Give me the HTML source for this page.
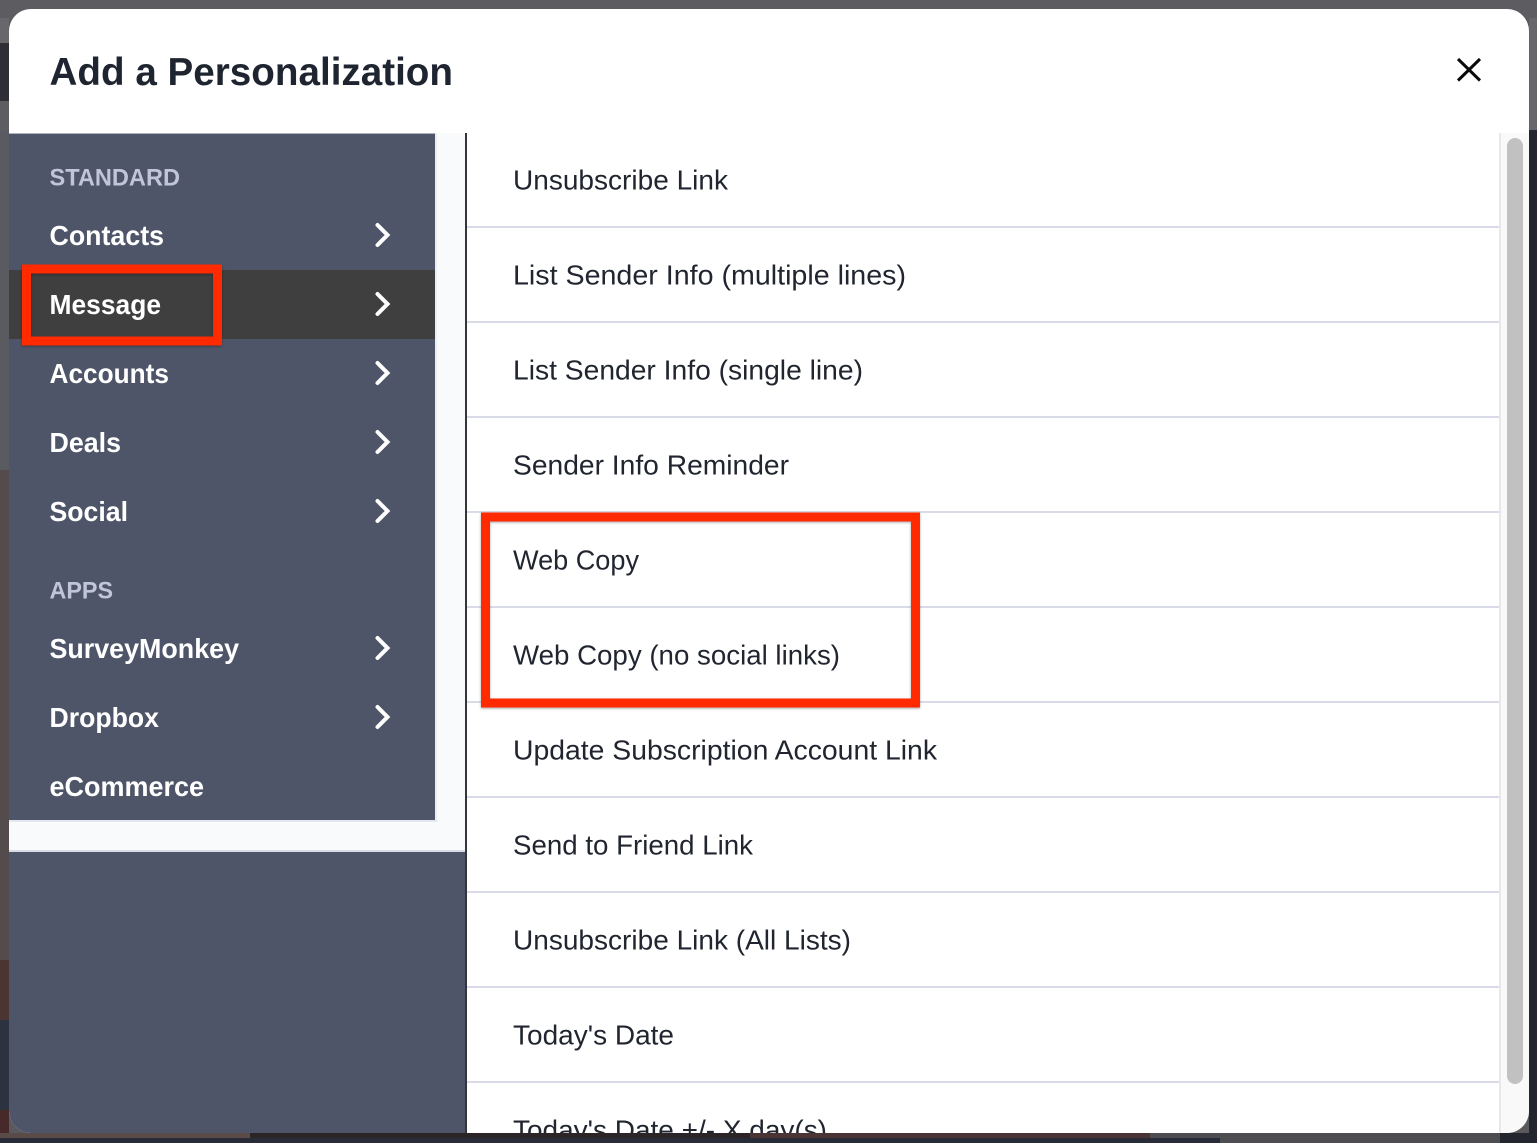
<!DOCTYPE html>
<html>
<head>
<meta charset="utf-8">
<style>
html,body{margin:0;padding:0;width:1537px;height:1143px;overflow:hidden;background:#5a5a5e}
svg{position:absolute;left:0;top:0;display:block}
text{font-family:"Liberation Sans",sans-serif}
.t{font-size:27.5px;fill:#20252f}
.n{font-size:28px;font-weight:700;fill:#fff}
.h{font-size:24px;font-weight:700;fill:#c0c5d8}
</style>
</head>
<body>
<svg width="1537" height="1143" viewBox="0 0 1537 1143" xmlns="http://www.w3.org/2000/svg">
<defs>
<clipPath id="m"><rect x="9" y="9" width="1520" height="1124" rx="22"/></clipPath>
<filter id="s" x="-10%" y="-10%" width="120%" height="120%"><feDropShadow dx="0" dy="1" stdDeviation="1.2" flood-color="#000" flood-opacity=".35"/></filter>
</defs>

<!-- backdrop -->
<rect width="1537" height="1143" fill="#5a5a5e"/>
<rect width="1537" height="18" fill="#5c5c61"/>
<rect x="0" y="18" width="9" height="25" fill="#68686c"/>
<rect x="0" y="43" width="9" height="58" fill="#2e2f36"/>
<rect x="0" y="101" width="9" height="29" fill="#5e5e62"/>
<rect x="0" y="130" width="9" height="340" fill="#5a5b60"/>
<rect x="0" y="470" width="9" height="490" fill="#544c4c"/>
<rect x="0" y="960" width="9" height="60" fill="#4a3532"/>
<rect x="0" y="1020" width="9" height="90" fill="#2d3240"/>
<rect x="0" y="1110" width="9" height="25" fill="#48292a"/>
<rect x="1529" y="18" width="8" height="112" fill="#66666b"/>
<rect x="1529" y="130" width="8" height="1013" fill="#23262f"/>
<rect x="0" y="1133" width="250" height="5" fill="#5a4a48"/>
<rect x="250" y="1133" width="500" height="5" fill="#2b2527"/>
<rect x="750" y="1133" width="400" height="5" fill="#4a3436"/>
<rect x="1150" y="1133" width="350" height="10" fill="#4e4e52"/>
<rect x="1500" y="1133" width="37" height="10" fill="#23262f"/>
<rect x="0" y="1138" width="1220" height="5" fill="#282c38"/>

<!-- modal -->
<g clip-path="url(#m)">
<rect x="9" y="9" width="1520" height="1124" fill="#fff"/>

<!-- left column -->
<rect x="9" y="133" width="456" height="1000" fill="#4f5568"/>
<rect x="9" y="821" width="456" height="29" fill="#f9fafb"/>
<rect x="435" y="133" width="30" height="717" fill="#f9fafb"/>
<rect x="435" y="133" width="2" height="689" fill="#eceef3"/>
<rect x="9" y="820" width="428" height="2" fill="#e4e7ee"/>
<rect x="9" y="850" width="456" height="2" fill="#d9dce4"/>
<rect x="9" y="133" width="426" height="1" fill="#aeb2bf"/>
<rect x="465" y="133" width="2" height="1000" fill="#34353b"/>
<rect x="9" y="270" width="426" height="69" fill="#3f3f3f"/>

<!-- list separators -->
<g fill="#d9dce8">
<rect x="467" y="226" width="1032" height="2"/>
<rect x="467" y="321" width="1032" height="2"/>
<rect x="467" y="416" width="1032" height="2"/>
<rect x="467" y="511" width="1032" height="2"/>
<rect x="467" y="606" width="1032" height="2"/>
<rect x="467" y="701" width="1032" height="2"/>
<rect x="467" y="796" width="1032" height="2"/>
<rect x="467" y="891" width="1032" height="2"/>
<rect x="467" y="986" width="1032" height="2"/>
<rect x="467" y="1081" width="1032" height="2"/>
</g>

<!-- scrollbar -->
<rect x="1499" y="133" width="30" height="1000" fill="#f9f9f9"/>
<rect x="1499" y="133" width="2" height="1000" fill="#e8e8e8"/>
<rect x="1507" y="138" width="16" height="946" rx="8" fill="#c1c1c1"/>

<!-- list text -->
<text class="t" x="513" y="189.5" textLength="215" lengthAdjust="spacingAndGlyphs">Unsubscribe Link</text>
<text class="t" x="513" y="284.5" textLength="393" lengthAdjust="spacingAndGlyphs">List Sender Info (multiple lines)</text>
<text class="t" x="513" y="379.5" textLength="350" lengthAdjust="spacingAndGlyphs">List Sender Info (single line)</text>
<text class="t" x="513" y="474.5" textLength="276" lengthAdjust="spacingAndGlyphs">Sender Info Reminder</text>
<text class="t" x="513" y="569.5" textLength="126" lengthAdjust="spacingAndGlyphs">Web Copy</text>
<text class="t" x="513" y="664.5" textLength="327" lengthAdjust="spacingAndGlyphs">Web Copy (no social links)</text>
<text class="t" x="513" y="759.5" textLength="424" lengthAdjust="spacingAndGlyphs">Update Subscription Account Link</text>
<text class="t" x="513" y="854.5" textLength="240" lengthAdjust="spacingAndGlyphs">Send to Friend Link</text>
<text class="t" x="513" y="949.5" textLength="338" lengthAdjust="spacingAndGlyphs">Unsubscribe Link (All Lists)</text>
<text class="t" x="513" y="1044.5" textLength="161" lengthAdjust="spacingAndGlyphs">Today's Date</text>
<text class="t" x="513" y="1139.5" textLength="314" lengthAdjust="spacingAndGlyphs">Today's Date +/- X day(s)</text>

<!-- title -->
<text x="49.5" y="85" font-size="39" font-weight="700" fill="#1f2530" textLength="403.5" lengthAdjust="spacingAndGlyphs">Add a Personalization</text>

<!-- nav text -->
<text class="h" x="49.5" y="185.5" textLength="130.5" lengthAdjust="spacingAndGlyphs">STANDARD</text>
<text class="n" x="49.5" y="245" textLength="114.5" lengthAdjust="spacingAndGlyphs">Contacts</text>
<text class="n" x="49.5" y="314" textLength="111.5" lengthAdjust="spacingAndGlyphs">Message</text>
<text class="n" x="49.5" y="383" textLength="119.5" lengthAdjust="spacingAndGlyphs">Accounts</text>
<text class="n" x="49.5" y="452" textLength="71.5" lengthAdjust="spacingAndGlyphs">Deals</text>
<text class="n" x="49.5" y="521" textLength="78.5" lengthAdjust="spacingAndGlyphs">Social</text>
<text class="h" x="49.5" y="598.5" textLength="63.5" lengthAdjust="spacingAndGlyphs">APPS</text>
<text class="n" x="49.5" y="658" textLength="189.5" lengthAdjust="spacingAndGlyphs">SurveyMonkey</text>
<text class="n" x="49.5" y="727" textLength="109.5" lengthAdjust="spacingAndGlyphs">Dropbox</text>
<text class="n" x="49.5" y="796" textLength="154.5" lengthAdjust="spacingAndGlyphs">eCommerce</text>

<!-- chevrons -->
<g fill="none" stroke="#fff" stroke-width="4" stroke-linecap="round" stroke-linejoin="miter">
<path d="M377.5 225 387.5 235 377.5 245"/>
<path d="M377.5 294 387.5 304 377.5 314"/>
<path d="M377.5 363 387.5 373 377.5 383"/>
<path d="M377.5 432 387.5 442 377.5 452"/>
<path d="M377.5 501 387.5 511 377.5 521"/>
<path d="M377.5 638 387.5 648 377.5 658"/>
<path d="M377.5 707 387.5 717 377.5 727"/>
</g>

<!-- close -->
<path d="M1458 59 1480 80.5M1480 59 1458 80.5" fill="none" stroke="#0a0a0a" stroke-width="3"/>
</g>

<!-- red annotations -->
<rect x="26.5" y="269" width="191" height="72" fill="none" stroke="#ff2a00" stroke-width="9" filter="url(#s)"/>
<rect x="485.5" y="517" width="430" height="186" fill="none" stroke="#ff2a00" stroke-width="9" filter="url(#s)"/>
</svg>
</body>
</html>
